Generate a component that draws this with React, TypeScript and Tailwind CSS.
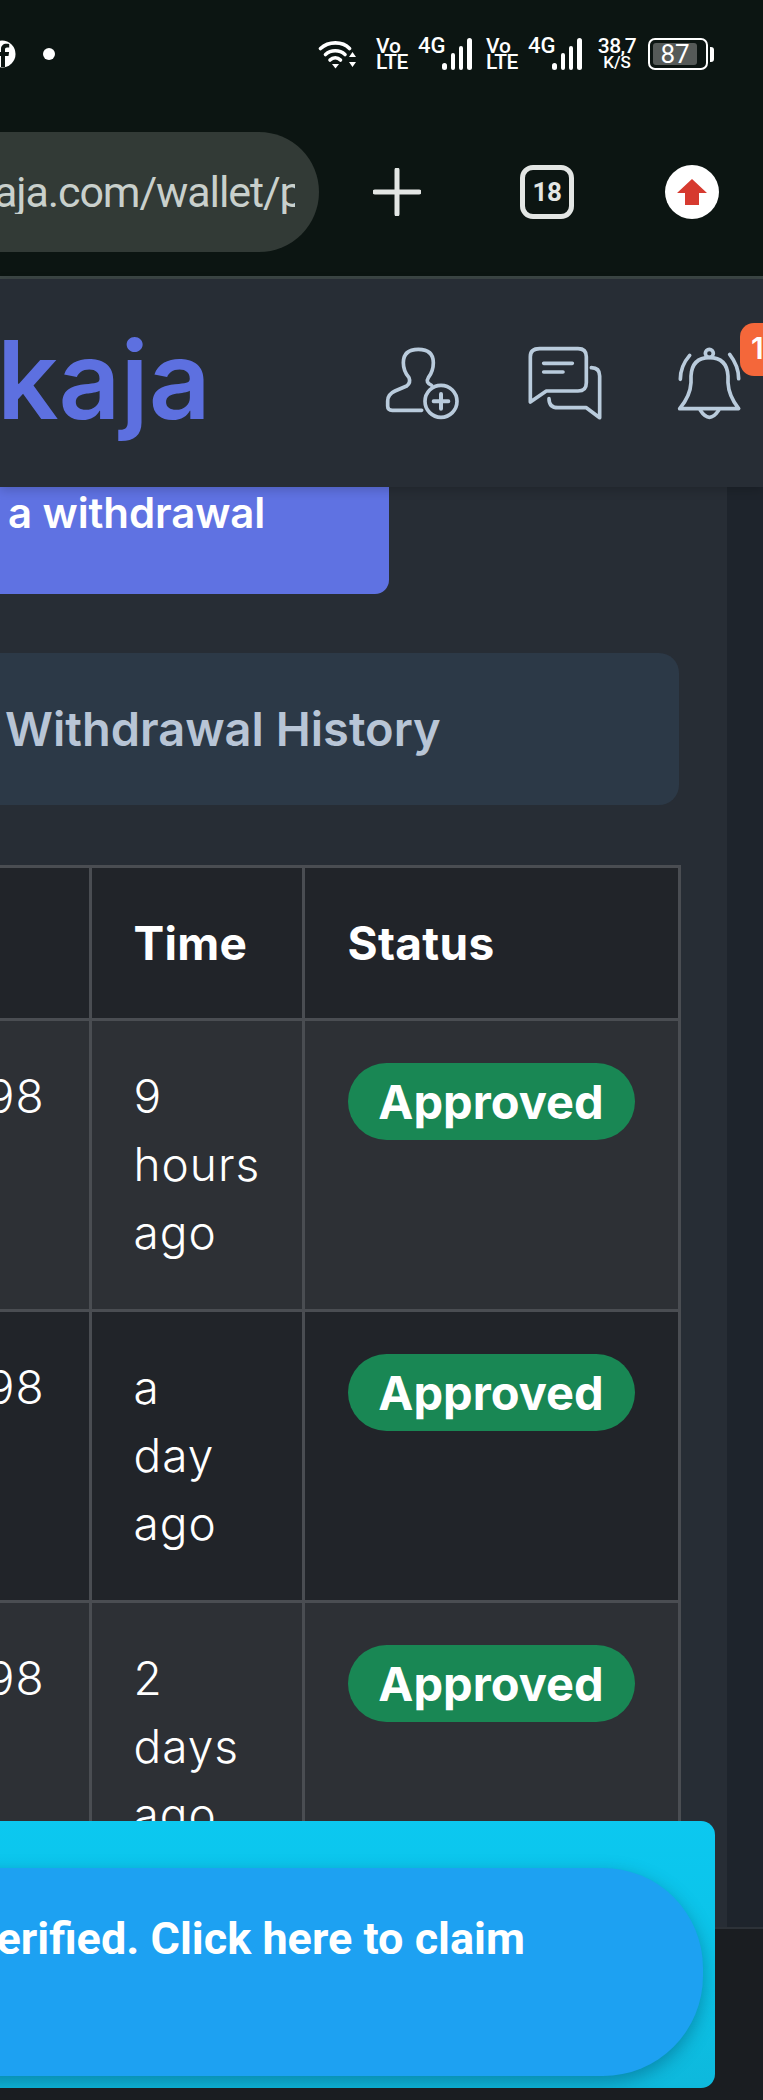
import React from "react";

const poppins = "font-['Inter','Noto_Sans',sans-serif]";

const rows = [
  { lines: ["9", "hours", "ago"], bg: "bg-[#2d3035]" },
  { lines: ["a", "day", "ago"], bg: "bg-[#212429]" },
  { lines: ["2", "days", "ago"], bg: "bg-[#2d3035]" },
];

function Signal() {
  return (
    <div className="relative w-[31px] h-[32px]">
      <span className="absolute left-[-24px] top-[-2px] text-[22px] leading-[20px] font-medium text-white whitespace-nowrap">4G</span>
      <div className="absolute left-0 bottom-0 flex items-end gap-[4px]">
        <span className="w-[5px] h-[7px] rounded-full bg-white" />
        <span className="w-[4px] h-[17px] rounded-full bg-white" />
        <span className="w-[4px] h-[24px] rounded-full bg-white" />
        <span className="w-[5px] h-[32px] rounded-full bg-white" />
      </div>
    </div>
  );
}

function VoLte() {
  return (
    <div className="flex flex-col text-white font-medium text-[21px] leading-[16px] w-[30px]">
      <span>Vo</span>
      <span className="tracking-[-0.5px]">LTE</span>
    </div>
  );
}

function StatusBar() {
  return (
    <div className="flex items-center h-[32px] mt-[38px] font-['Roboto',sans-serif]">
      <svg width="16" height="28" viewBox="0 0 16 28" className="shrink-0">
        <circle cx="2" cy="14" r="13.5" fill="#fff" />
        <path d="M5 27V16h3.5l.6-4H5V9.500C5 8.300 5.600 7.500 7 7.500h2.200V4C8.600 3.900 7.500 3.800 6.300 3.800 3.200 3.800 1 5.700 1 9.100V12h-3.500v4H1v11z" fill="#0c1512" />
      </svg>
      <span className="ml-[27px] w-[12px] h-[12px] rounded-full bg-white" />
      <svg width="39" height="30" viewBox="0 0 38 30" className="ml-[263px] shrink-0" fill="none">
        <path d="M2 9.500C10 2 24 2 31 9.500" stroke="#fff" strokeWidth="3.600" strokeLinecap="round" />
        <path d="M7 15.500C12.500 10.500 21 10.500 26.500 15.500" stroke="#fff" strokeWidth="3.600" strokeLinecap="round" />
        <path d="M11.500 21C14.500 18 19 18 22 21" stroke="#fff" strokeWidth="3.600" strokeLinecap="round" />
        <path d="M13.500 25h7l-3.500 4.500z" fill="#fff" />
        <path d="M34 13l3.500 5h-7zM34 28l-3.500-5h7z" fill="#fff" />
      </svg>
      <div className="ml-[19px]"><VoLte /></div>
      <div className="ml-[36px]"><Signal /></div>
      <div className="ml-[13px]"><VoLte /></div>
      <div className="ml-[36px]"><Signal /></div>
      <div className="ml-[15px] flex flex-col items-center text-white font-medium w-[38px]">
        <span className="text-[21px] leading-[17px] tracking-[-0.5px]">38,7</span>
        <span className="text-[17px] leading-[15px]">K/S</span>
      </div>
      <div className="ml-[12px] w-[60px] h-[32px] rounded-[7px] border-[2px] border-white p-[3px] shrink-0">
        <div className="w-[44px] h-full rounded-[3px] bg-[#555a58] flex items-center justify-center text-white text-[26px] leading-none">87</div>
      </div>
      <span className="ml-[2px] w-[4px] h-[15px] rounded-r-[3px] bg-white" />
    </div>
  );
}

function BrowserBar() {
  return (
    <div className="flex items-center mt-[62px] font-['Roboto',sans-serif]">
      <div className="w-[319px] h-[120px] rounded-r-[60px] bg-[#323a36] flex items-center shrink-0">
        <div className="w-[295px] overflow-hidden whitespace-nowrap text-[43px] tracking-[-1.1px] text-[#c9d0cc] leading-none">
          <span className="block ml-[-6px]">aja.com/wallet/pa</span>
        </div>
      </div>
      <svg width="48" height="48" viewBox="0 0 48 48" className="ml-[54px] shrink-0">
        <path d="M24 2v44M2 24h44" stroke="#e3e6e4" strokeWidth="5" strokeLinecap="round" />
      </svg>
      <div className="ml-[99px] w-[54px] h-[54px] rounded-[13px] border-[5px] border-[#e3e6e4] flex items-center justify-center text-[#e3e6e4] text-[26px] font-bold tracking-[-0.5px] shrink-0">18</div>
      <div className="ml-[91px] w-[54px] h-[54px] rounded-full bg-white flex items-center justify-center shrink-0">
        <svg width="30" height="26" viewBox="0 0 30 26">
          <path d="M15 0l15 14h-8v12H8V14H0z" fill="#d63a2f" />
        </svg>
      </div>
    </div>
  );
}

function PersonPlus() {
  return (
    <svg width="75" height="75" viewBox="40 50 225 225" fill="none" stroke="#b9cbdc" strokeWidth="11" strokeLinecap="round" strokeLinejoin="round">
      <path d="M150 243H62Q48 243 48 230V215Q48 195 70 185L105 170Q118 160 112 145Q95 125 95 100Q95 60 140 60Q185 60 185 100Q185 125 170 145Q160 160 180 168" />
      <circle cx="208" cy="216" r="48" />
      <path d="M208 194v44M186 216h44" strokeWidth="12" />
    </svg>
  );
}

function Chats() {
  return (
    <svg width="75" height="75" viewBox="475 50 225 225" fill="none" stroke="#b9cbdc" strokeWidth="11" strokeLinecap="round" strokeLinejoin="round">
      <path d="M510 58H625Q650 58 650 82V160Q650 185 625 185H530L482 218V82Q482 58 510 58Z" />
      <path d="M522 102H608M522 128H580" />
      <path d="M665 115Q690 115 690 140V265L650 235H565Q538 235 538 208" />
    </svg>
  );
}

function Bell() {
  return (
    <svg width="75" height="75" viewBox="905 50 225 225" fill="none" stroke="#b9cbdc" strokeWidth="11" strokeLinecap="round" strokeLinejoin="round">
      <path d="M928 238Q960 200 962 160V140Q965 85 1017 85Q1070 85 1073 140V160Q1075 200 1105 238Z" />
      <circle cx="1017" cy="72" r="12" />
      <path d="M990 243Q1017 285 1045 243" />
      <path d="M930 150Q930 110 958 78M1105 148Q1105 110 1078 75" />
    </svg>
  );
}

function Header() {
  return (
    <div className="relative z-10 h-[208px] bg-[#272d35] shadow-[0_3px_10px_rgba(0,0,0,0.18)] flex items-start">
      <span className={`${poppins} ml-[-3px] mt-[41px] w-[350px] text-[108px] leading-[120px] font-semibold tracking-[0px] text-[#5d70e0]`}>kaja</span>
      <div className="ml-[38px] mt-[67px]"><PersonPlus /></div>
      <div className="ml-[68px] mt-[67px]"><Chats /></div>
      <div className="ml-[69px] mt-[67px]"><Bell /></div>
      <span className={`${poppins} absolute left-[740px] top-[44px] w-[50px] h-[53px] rounded-[14px] bg-[#f4673a] pl-[11px] text-[30px] leading-[50px] font-semibold text-white`}>1</span>
    </div>
  );
}

function HistoryTable() {
  const th = "border-[3px] border-[#4a4d52] bg-[#212429] align-middle text-left h-[153px] font-bold text-[46px] tracking-[0.3px] text-white";
  const td = "border-[3px] border-[#4a4d52] align-top text-[46px] leading-[68px] tracking-[1px] font-light text-white";
  return (
    <table className="mt-[60px] w-[679px] table-fixed border-collapse">
      <colgroup>
        <col className="w-[90px]" />
        <col className="w-[213px]" />
        <col className="w-[376px]" />
      </colgroup>
      <thead>
        <tr>
          <th className={`${th} border-l-0`} />
          <th className={`${th} pl-[42px]`}>Time</th>
          <th className={`${th} pl-[43px]`}>Status</th>
        </tr>
      </thead>
      <tbody>
        {rows.map((r, i) => (
          <tr key={i}>
            <td className={`${td} ${r.bg} border-l-0 h-[291px] pt-[41px]`}>
              <div className="flex justify-end overflow-hidden pr-[44px]">98</div>
            </td>
            <td className={`${td} ${r.bg} pl-[42px] pt-[41px]`}>
              {r.lines.map(l => <div key={l}>{l}</div>)}
            </td>
            <td className={`${td} ${r.bg} pl-[43px] pt-[42px]`}>
              <span className="inline-flex items-center justify-center w-[287px] h-[77px] rounded-full bg-[#198754] text-[47px] leading-none tracking-normal font-bold text-white">Approved</span>
            </td>
          </tr>
        ))}
      </tbody>
    </table>
  );
}

export default function App() {
  return (
    <div className={`${poppins} relative w-[763px] h-[2100px] overflow-hidden bg-[#1a1d21]`}>
      <div className="h-[276px] bg-[#0c1512] overflow-hidden">
        <StatusBar />
        <BrowserBar />
      </div>
      <div className="h-[3px] bg-[#3c4645]" />
      <Header />

      <div className="flex h-[1442px] border-b-[2px] border-[#2d3238] overflow-hidden">
        <div className="w-[727px] shrink-0 bg-[#272d35]">
          <div className="w-[389px] h-[107px] rounded-br-[14px] bg-[#5f72e2] pl-[8px] pt-[1px] text-[42px] leading-[50px] font-semibold tracking-[-0.1px] text-white">
            a withdrawal
          </div>
          <div className="mt-[59px] w-[679px] h-[152px] rounded-r-[20px] bg-[#2c3947] pl-[5px] flex items-center text-[47px] font-semibold text-[#b8c5d6]">
            Withdrawal History
          </div>
          <HistoryTable />
        </div>
        <div className="flex-1 bg-[#1e242c]" />
      </div>

      <div className="absolute left-[-40px] top-[1821px] w-[755px] h-[267px] rounded-[14px] bg-[linear-gradient(180deg,#0cc8f0_0%,#0cc2e6_60%,#0eb8dc_100%)] overflow-hidden">
        <div className="mt-[47px] ml-[-60px] w-[803px] h-[208px] rounded-r-[100px] bg-[#1da1f2] shadow-[0_6px_18px_rgba(0,60,90,0.4)] flex justify-end pr-[178px] pt-[46px] font-['Roboto',sans-serif] text-[45px] leading-[50px] font-bold text-white whitespace-nowrap overflow-hidden">
          verified. Click here to claim
        </div>
      </div>
    </div>
  );
}
